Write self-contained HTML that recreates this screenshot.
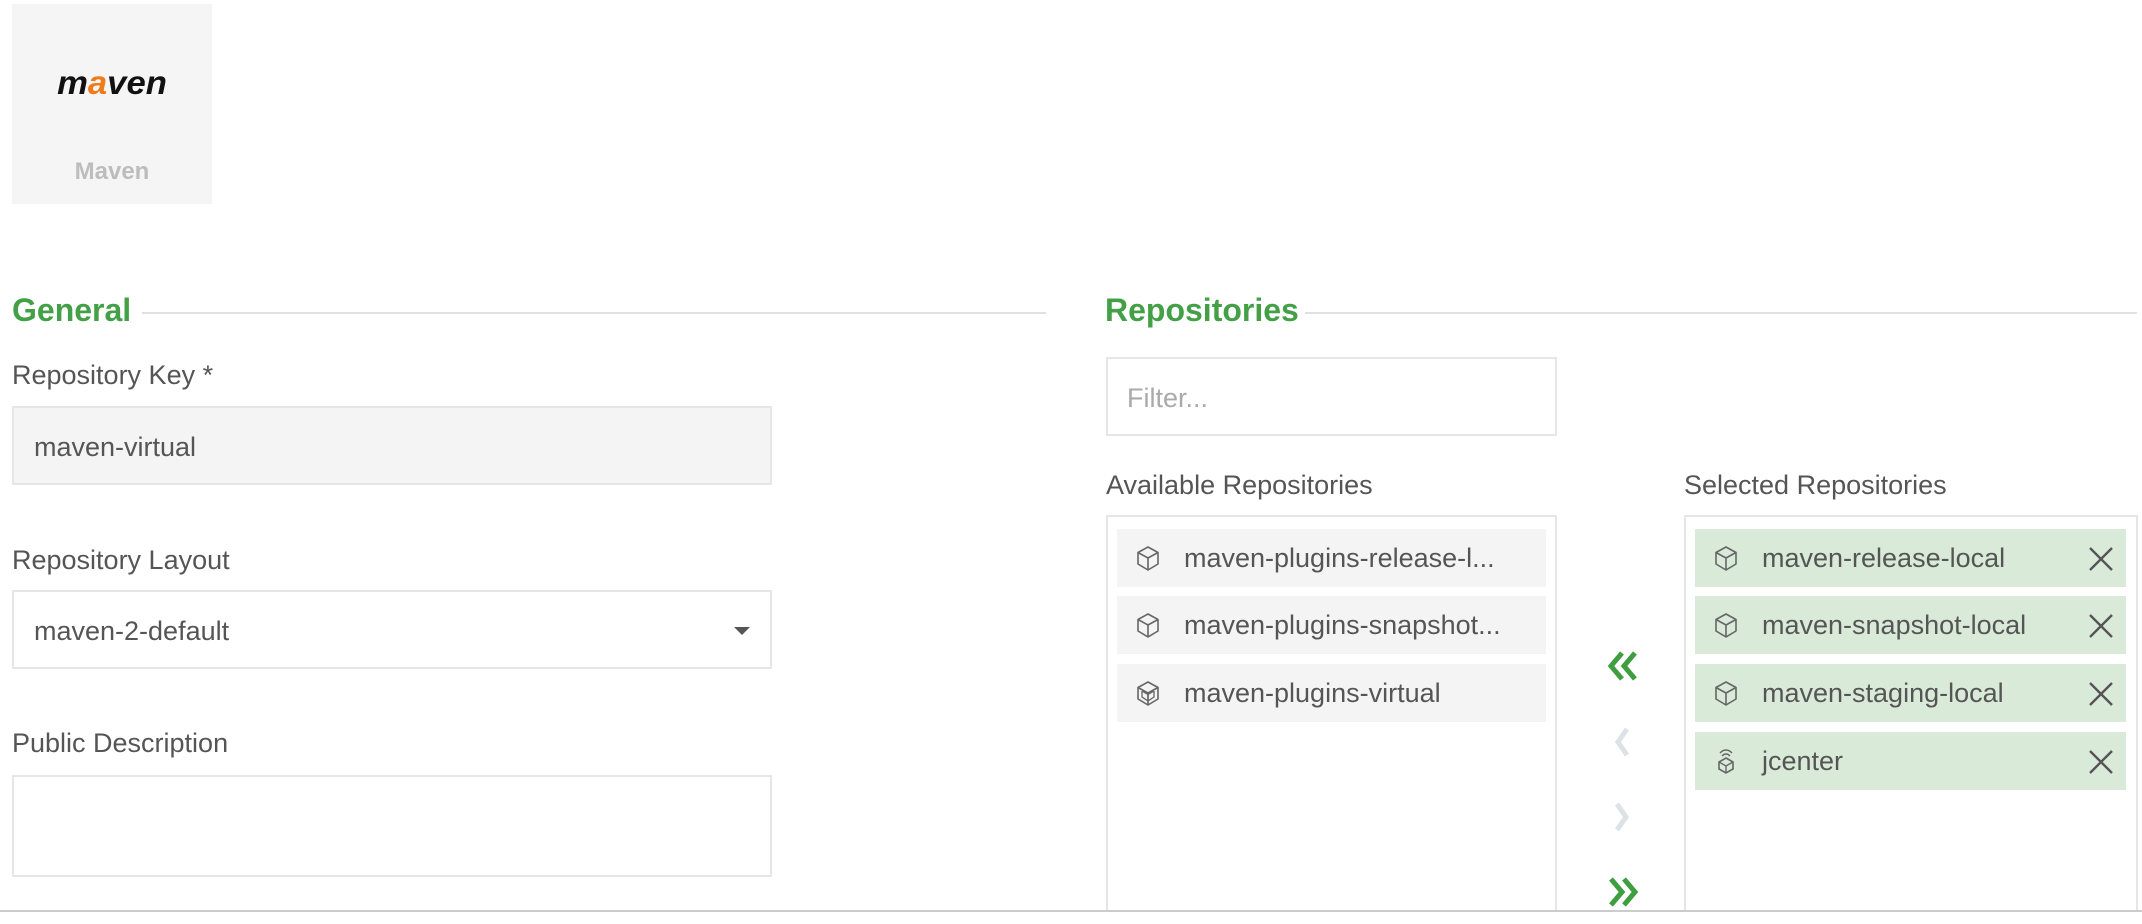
<!DOCTYPE html>
<html style="width:2142px;height:924px;overflow:hidden"><head><meta charset="utf-8"><style>
*{box-sizing:border-box;margin:0;padding:0}
body{width:2142px;height:924px;background:#fff;font-family:"Liberation Sans",sans-serif;color:#555;position:relative;overflow:hidden}
.a{position:absolute;white-space:nowrap}
.h{font-weight:bold;color:#43a047;font-size:32px;line-height:40px}
.line{position:absolute;height:2px;background:#e0e0e0}
.lbl{font-size:27px;line-height:34px;color:#555}
.box{position:absolute;border:2px solid #e6e6e6;background:#fff}
.item{position:absolute;height:58px;background:#f4f4f4;font-size:27px;line-height:58px;color:#555;padding-left:67px;overflow:hidden}
.item.s{background:#d9ead9}
.item svg{position:absolute;left:19px;top:16px}
</style></head><body>
<div class="a" style="left:12px;top:4px;width:200px;height:200px;background:#f5f5f5"></div>
<div class="a" style="left:12px;width:200px;top:64px;text-align:center;font-size:33px;font-weight:900;font-style:italic;color:#111;letter-spacing:0px;transform:scaleX(1.05)">m<span style="color:#f07b1b">a</span>ven</div>
<div class="a" style="left:12px;width:200px;top:158px;text-align:center;font-size:24px;font-weight:bold;color:#bdbdbd">Maven</div>

<div class="a h" style="left:12px;top:290px">General</div>
<div class="line" style="left:142px;width:904px;top:312px"></div>
<div class="a lbl" style="left:12px;top:358px">Repository Key *</div>
<div class="box" style="left:12px;top:406px;width:760px;height:79px;background:#f4f4f4"></div>
<div class="a lbl" style="left:34px;top:430px;color:#555">maven-virtual</div>
<div class="a lbl" style="left:12px;top:543px">Repository Layout</div>
<div class="box" style="left:12px;top:590px;width:760px;height:79px"></div>
<div class="a lbl" style="left:34px;top:614px">maven-2-default</div>
<div class="a" style="left:734px;top:627px;width:0;height:0;border-left:8px solid transparent;border-right:8px solid transparent;border-top:8px solid #555"></div>
<div class="a lbl" style="left:12px;top:726px">Public Description</div>
<div class="box" style="left:12px;top:775px;width:760px;height:102px"></div>

<div class="a h" style="left:1105px;top:290px">Repositories</div>
<div class="line" style="left:1305px;width:832px;top:312px"></div>
<div class="box" style="left:1106px;top:357px;width:451px;height:79px"></div>
<div class="a lbl" style="left:1127px;top:381px;color:#aaa">Filter...</div>
<div class="a lbl" style="left:1106px;top:468px">Available Repositories</div>
<div class="a lbl" style="left:1684px;top:468px">Selected Repositories</div>
<div class="box" style="left:1106px;top:515px;width:451px;height:400px"></div>
<div class="box" style="left:1684px;top:515px;width:454px;height:400px"></div>

<svg width="0" height="0" style="position:absolute"><defs>
<g id="cube" fill="none" stroke="#666" stroke-width="1.6" stroke-linejoin="round"><path d="M12 2 L22 7.5 L22 19 L12 25 L2 19 L2 7.5 Z M2 7.5 L12 13 L22 7.5 M12 13 L12 25"/></g>
</defs></svg>

<div class="item" style="left:1117px;top:529px;width:429px">maven-plugins-release-l...<svg width="24" height="27"><use href="#cube"/></svg></div>
<div class="item" style="left:1117px;top:596px;width:429px">maven-plugins-snapshot...<svg width="24" height="27"><use href="#cube"/></svg></div>
<div class="item" style="left:1117px;top:664px;width:429px">maven-plugins-virtual<svg width="24" height="27"><use href="#cube"/><path d="M6 11 L12 14.5 L18 11 M12 14.5 L12 21 M6 11 L6 17 L12 21 L18 17 L18 11" stroke="#666" fill="none" stroke-width="1.3"/></svg></div>

<div class="item s" style="left:1695px;top:529px;width:431px">maven-release-local<svg width="24" height="27"><use href="#cube"/></svg><svg style="left:auto;right:12px;top:17px" width="26" height="26"><path d="M2 2L24 24M24 2L2 24" stroke="#555" stroke-width="2.4"/></svg></div>
<div class="item s" style="left:1695px;top:596px;width:431px">maven-snapshot-local<svg width="24" height="27"><use href="#cube"/></svg><svg style="left:auto;right:12px;top:17px" width="26" height="26"><path d="M2 2L24 24M24 2L2 24" stroke="#555" stroke-width="2.4"/></svg></div>
<div class="item s" style="left:1695px;top:664px;width:431px">maven-staging-local<svg width="24" height="27"><use href="#cube"/></svg><svg style="left:auto;right:12px;top:17px" width="26" height="26"><path d="M2 2L24 24M24 2L2 24" stroke="#555" stroke-width="2.4"/></svg></div>
<div class="item s" style="left:1695px;top:732px;width:431px">jcenter<svg width="24" height="30" style="top:13px"><path d="M6 8 Q12 2 18 8 M8 11 Q12 7 16 11" stroke="#666" fill="none" stroke-width="1.5"/><path d="M12 13 L19 17 L19 24 L12 28 L5 24 L5 17 Z" fill="none" stroke="#666" stroke-width="1.6"/><path d="M5 17 L12 21 L19 17 M12 21 L12 28" stroke="#666" fill="none" stroke-width="1.4"/></svg><svg style="left:auto;right:12px;top:17px" width="26" height="26"><path d="M2 2L24 24M24 2L2 24" stroke="#555" stroke-width="2.4"/></svg></div>

<svg class="a" style="left:1606px;top:650px" width="34" height="32"><path d="M16 3 L5 16 L16 29 M29 3 L18 16 L29 29" stroke="#3f9e3f" stroke-width="5" fill="none"/></svg>
<svg class="a" style="left:1612px;top:726px" width="20" height="32"><path d="M15 3 L6 16 L15 29" stroke="#dde2e6" stroke-width="5" fill="none"/></svg>
<svg class="a" style="left:1612px;top:801px" width="20" height="32"><path d="M5 3 L14 16 L5 29" stroke="#dde2e6" stroke-width="5" fill="none"/></svg>
<svg class="a" style="left:1606px;top:876px" width="34" height="32"><path d="M5 3 L16 16 L5 29 M18 3 L29 16 L18 29" stroke="#3f9e3f" stroke-width="5" fill="none"/></svg>

<div class="a" style="left:0;top:910px;width:2142px;height:14px;background:#fff;border-top:2px solid #ccc"></div>
</body></html>
